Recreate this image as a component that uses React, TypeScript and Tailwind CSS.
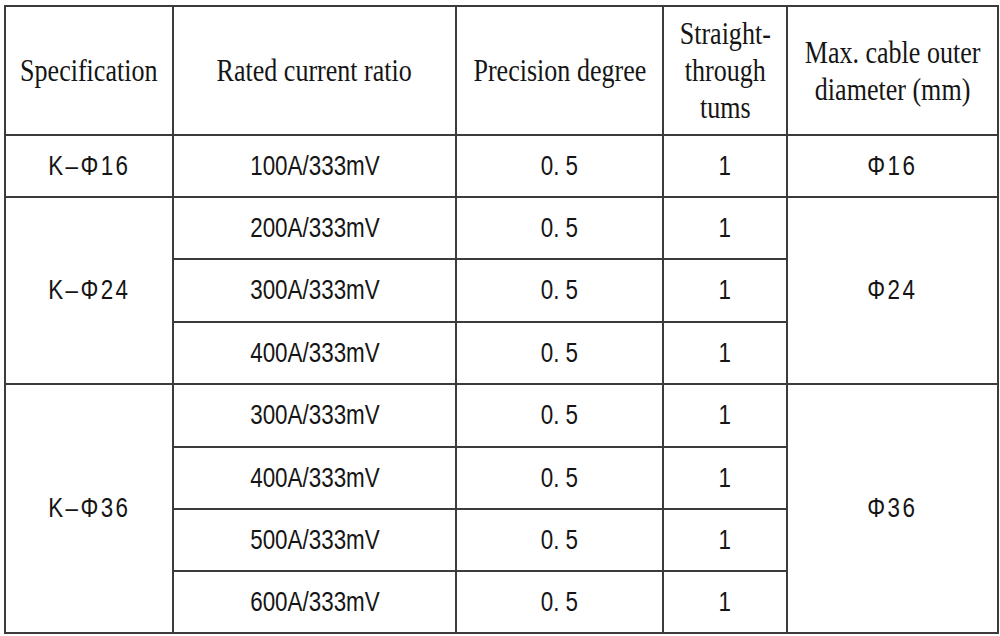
import React from "react";

type Row = { spec?: { label: string; span: number }; ratio: string; dia?: { label: string; span: number }; h: string };

const rows: Row[] = [
  { spec: { label: "K–Φ16", span: 1 }, ratio: "100A/333mV", dia: { label: "Φ16", span: 1 }, h: "h-[62px]" },
  { spec: { label: "K–Φ24", span: 3 }, ratio: "200A/333mV", dia: { label: "Φ24", span: 3 }, h: "h-[62px]" },
  { ratio: "300A/333mV", h: "h-[63px]" },
  { ratio: "400A/333mV", h: "h-[62px]" },
  { spec: { label: "K–Φ36", span: 4 }, ratio: "300A/333mV", dia: { label: "Φ36", span: 4 }, h: "h-[63px]" },
  { ratio: "400A/333mV", h: "h-[62px]" },
  { ratio: "500A/333mV", h: "h-[62px]" },
  { ratio: "600A/333mV", h: "h-[62px]" },
];

const cell = "border-2 border-[#3b3b3b] text-center align-middle p-0";

const Serif: React.FC<{ children: React.ReactNode }> = ({ children }) => (
  <span className="inline-block scale-x-[0.84] font-['Liberation_Serif',serif] text-[31px] leading-[37px] whitespace-nowrap">
    {children}
  </span>
);

const Sans: React.FC<{ children: React.ReactNode; wide?: boolean }> = ({ children, wide }) => (
  <span
    className={
      wide
        ? "inline-block scale-x-[0.8] font-['Liberation_Sans',Arial,sans-serif] text-[28px] leading-none whitespace-nowrap tracking-[3px]"
        : "inline-block scale-x-[0.8] font-['Liberation_Sans',Arial,sans-serif] text-[28px] leading-none whitespace-nowrap"
    }
  >
    {children}
  </span>
);

export default function App() {
  return (
    <div className="w-[1000px] h-[636px] bg-white pt-[5px] pl-[4px] text-[#151515] overflow-hidden">
      <table className="table-fixed border-collapse w-[993px]">
        <colgroup>
          <col className="w-[168px]" />
          <col className="w-[283px]" />
          <col className="w-[207px]" />
          <col className="w-[124px]" />
          <col className="w-[211px]" />
        </colgroup>
        <thead>
          <tr className="h-[129px]">
            <th className={`${cell} font-normal`}>
              <Serif>Specification</Serif>
            </th>
            <th className={`${cell} font-normal`}>
              <Serif>Rated current ratio</Serif>
            </th>
            <th className={`${cell} font-normal`}>
              <Serif>Precision degree</Serif>
            </th>
            <th className={`${cell} font-normal`}>
              <Serif>
                Straight-
                <br />
                through
                <br />
                tums
              </Serif>
            </th>
            <th className={`${cell} font-normal`}>
              <Serif>
                Max. cable outer
                <br />
                diameter (mm)
              </Serif>
            </th>
          </tr>
        </thead>
        <tbody>
          {rows.map((row, idx) => (
            <tr key={idx} className={row.h}>
              {row.spec && (
                <td rowSpan={row.spec.span} className={cell}>
                  <Sans wide>{row.spec.label}</Sans>
                </td>
              )}
              <td className={cell}>
                <Sans>{row.ratio}</Sans>
              </td>
              <td className={cell}>
                <Sans>0. 5</Sans>
              </td>
              <td className={cell}>
                <Sans>1</Sans>
              </td>
              {row.dia && (
                <td rowSpan={row.dia.span} className={cell}>
                  <Sans wide>{row.dia.label}</Sans>
                </td>
              )}
            </tr>
          ))}
        </tbody>
      </table>
    </div>
  );
}
